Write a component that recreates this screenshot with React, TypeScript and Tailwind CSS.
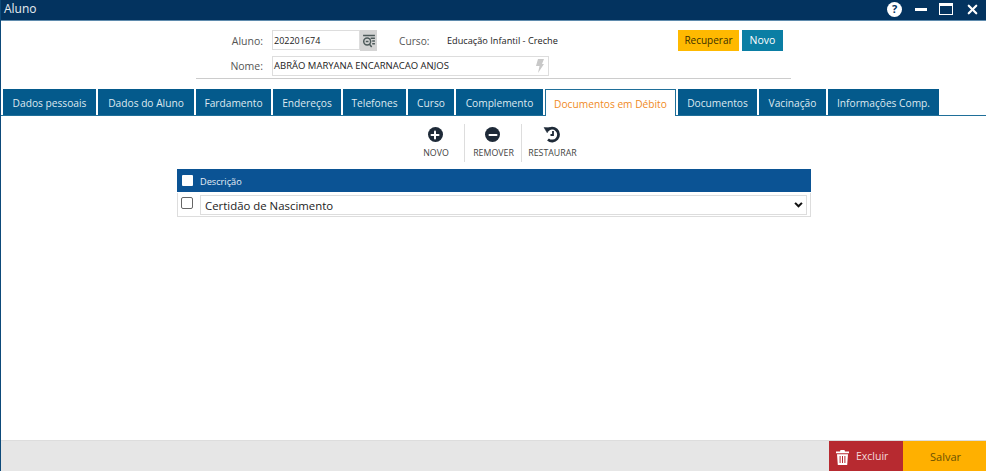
import { Plus, Minus, X } from "lucide-react";

const tabs = [
  { label: "Dados pessoais", w: "w-[93px]" },
  { label: "Dados do Aluno", w: "w-[96px]" },
  { label: "Fardamento", w: "w-[75px]" },
  { label: "Endereços", w: "w-[68px]" },
  { label: "Telefones", w: "w-[63px]" },
  { label: "Curso", w: "w-[46px]" },
  { label: "Complemento", w: "w-[87px]" },
  { label: "Documentos em Débito", w: "w-[131px]", active: true },
  { label: "Documentos", w: "w-[79px]" },
  { label: "Vacinação", w: "w-[67px]" },
  { label: "Informações Comp.", w: "w-[111px]" },
];

function ToolButton({ label, width, children }: { label: string; width: string; children: React.ReactNode }) {
  return (
    <div className={`flex flex-col items-center ${width}`}>
      <div className="h-[19px] flex items-center justify-center">{children}</div>
      <span className="mt-[4px] pl-[2px] text-[8.8px] leading-[12px] text-[#444]">{label}</span>
    </div>
  );
}

export default function App() {
  return (
    <div className="w-[986px] h-[471px] flex flex-col bg-white overflow-hidden border-l border-[#0d4a7a] font-['Open_Sans',sans-serif] text-[#333]">
      {/* barra de titulo */}
      <div className="h-[21px] shrink-0 bg-[#03335f] border-b border-[#5f8bad] flex items-center justify-between pl-[3px] pr-[6px]">
        <span className="text-[12px] text-[#e8eef3] leading-none -mt-[2px]">Aluno</span>
        <div className="flex items-center -mt-[2px]">
          <div className="w-[15px] h-[15px] rounded-full bg-white text-[#03335f] text-[11px] font-bold flex items-center justify-center">?</div>
          <div className="ml-[13px] w-[12px] h-[3px] bg-white" />
          <div className="ml-[12px] w-[14px] h-[12px] border-[1.5px] border-white border-t-[3px]" />
          <X size={15} strokeWidth={3.5} className="ml-[12px] text-white" />
        </div>
      </div>

      {/* cabecalho do aluno */}
      <div className="h-[68px] shrink-0 pt-[9px] pl-[195px]">
        <div className="flex items-start h-[26px]">
          <label className="w-[67px] mt-[3px] text-right text-[10.5px] leading-[16px] text-[#555]">Aluno:</label>
          <input
            readOnly
            value="202201674"
            className="ml-[9px] w-[88px] h-[20px] border border-[#ddd] px-[1px] text-[9px] text-[#222] outline-none"
          />
          <div className="w-[17px] h-[21px] bg-[#d4d4d4] flex items-center justify-center">
            <svg width="14" height="14" viewBox="0 0 13 13" fill="none" stroke="#4d5a5a" strokeWidth="1.4">
              <path d="M1 1.5h11M8 4h4M9.5 6.5H12M9.5 9H12" />
              <circle cx="4.8" cy="7" r="3.2" />
              <path d="M7 9.5l2 2.5M3.5 7h2.5" />
            </svg>
          </div>
          <span className="ml-[22px] mt-[3px] w-[48px] text-[10.2px] leading-[16px] text-[#555]">Curso:</span>
          <span className="mt-[3px] w-[231px] text-[9.2px] leading-[16px] text-[#222]">Educação Infantil - Creche</span>
          <button className="h-[21px] w-[61px] bg-[#ffb900] text-[10px] text-[#3b3000]">Recuperar</button>
          <button className="ml-[3px] h-[21px] w-[41px] bg-[#0a7ea4] text-[10.5px] text-white">Novo</button>
        </div>
        <div className="flex items-start">
          <label className="w-[67px] mt-[2px] text-right text-[10.5px] leading-[16px] text-[#555]">Nome:</label>
          <div className="ml-[9px] w-[277px] h-[20px] border border-[#ddd] flex items-center justify-between pl-[1px] pr-[4px]">
            <span className="text-[9.5px] text-[#222] leading-none">ABRÃO MARYANA ENCARNACAO ANJOS</span>
            <svg width="8" height="14" viewBox="0 0 8 14" fill="#c8c8c8">
              <path d="M2 0h6L6 5h2L2 14l1.5-7H0z" />
            </svg>
          </div>
        </div>
        <div className="mt-[2px] w-[595px] h-[1px] bg-[#ccc]" />
      </div>

      {/* abas */}
      <div className="h-[27px] shrink-0 flex gap-[2px] pl-[2px] border-b border-[#1f6f99]">
        {tabs.map((t) =>
          t.active ? (
            <div
              key={t.label}
              className={`${t.w} h-[27px] pt-[3px] bg-white border border-b-0 border-[#1f6f99] flex items-center justify-center text-[10.2px] text-[#f08a1d]`}
            >
              {t.label}
            </div>
          ) : (
            <div
              key={t.label}
              className={`${t.w} h-[26px] pt-[3px] bg-[#045a8c] flex items-center justify-center text-[10.2px] text-[#dfe9f0]`}
            >
              {t.label}
            </div>
          )
        )}
      </div>

      {/* barra de ferramentas */}
      <div className="h-[53px] shrink-0 flex justify-center items-start pt-[8px] pl-[1px]">
        <ToolButton label="NOVO" width="w-[57px]">
          <div className="mt-[2px] w-[15px] h-[15px] rounded-full bg-[#1e2a38] flex items-center justify-center">
            <Plus size={12} strokeWidth={4} className="text-white" />
          </div>
        </ToolButton>
        <div className="w-[1px] h-[38px] bg-[#ddd]" />
        <ToolButton label="REMOVER" width="w-[56px]">
          <div className="mt-[2px] w-[15px] h-[15px] rounded-full bg-[#1e2a38] flex items-center justify-center">
            <Minus size={12} strokeWidth={4} className="text-white" />
          </div>
        </ToolButton>
        <div className="w-[1px] h-[38px] bg-[#ddd]" />
        <ToolButton label="RESTAURAR" width="w-[60px]">
          <svg className="mt-[2px]" width="18" height="17" viewBox="0 0 18 17" fill="none" stroke="#1e2a38" strokeWidth="2.8">
            <path d="M4.5 4.2A6.4 6.4 0 1 1 5 13.5" />
            <path d="M1 1.5l6.2 0.3-3 5z" fill="#1e2a38" strokeWidth="0.5" />
            <path d="M10 5v4H7.5" strokeWidth="1.8" />
          </svg>
        </ToolButton>
      </div>

      {/* tabela */}
      <div className="ml-[176px] w-[634px]">
        <div className="h-[23px] mb-[1px] bg-[#0b5394] flex items-center pl-[5px]">
          <div className="w-[11px] h-[11px] bg-white rounded-[1px]" />
          <span className="ml-[7px] mt-[2px] text-[9.2px] text-[#e6eef5]">Descrição</span>
        </div>
        <div className="h-[24px] border-x border-b border-[#ddd] flex items-center pl-[3px] pr-[3px]">
          <input type="checkbox" className="-mt-[4px] w-[12px] h-[12px] appearance-none border border-[#666] rounded-[2px] bg-white shrink-0" />
          <div className="ml-[7px] flex-1 h-[20px] border border-[#ddd] flex items-center justify-between pl-[4px] pr-[3px]">
            <span className="mt-[2px] text-[11.4px] text-[#222] leading-none">Certidão de Nascimento</span>
            <svg width="9" height="6" viewBox="0 0 10 7" fill="none" stroke="#111" strokeWidth="2.4">
              <path d="M1 1l4 4 4-4" />
            </svg>
          </div>
        </div>
      </div>

      <div className="flex-1" />

      {/* rodape */}
      <div className="h-[31px] shrink-0 bg-[#e6e6e6] border-t border-[#ddd] flex justify-end">
        <button className="w-[74px] h-full pt-[2px] bg-[#b72a30] flex items-center pl-[7px] gap-[7px] text-[10.5px] text-[#f3dadb]">
          <svg width="13" height="15" viewBox="0 0 13 15" fill="#fff">
            <path d="M4.5 0h4l.5 1.5h4v1.7H0V1.5h4zM1 4.2h11l-.8 10.8H1.8zM3.6 6v7h1V6zM6 6v7h1V6zM8.4 6v7h1V6z" fillRule="evenodd" />
          </svg>
          Excluir
        </button>
        <button className="w-[83px] h-full pt-[2px] pl-[2px] bg-[#ffb000] text-[11px] text-[#6b5200]">Salvar</button>
      </div>
    </div>
  );
}
